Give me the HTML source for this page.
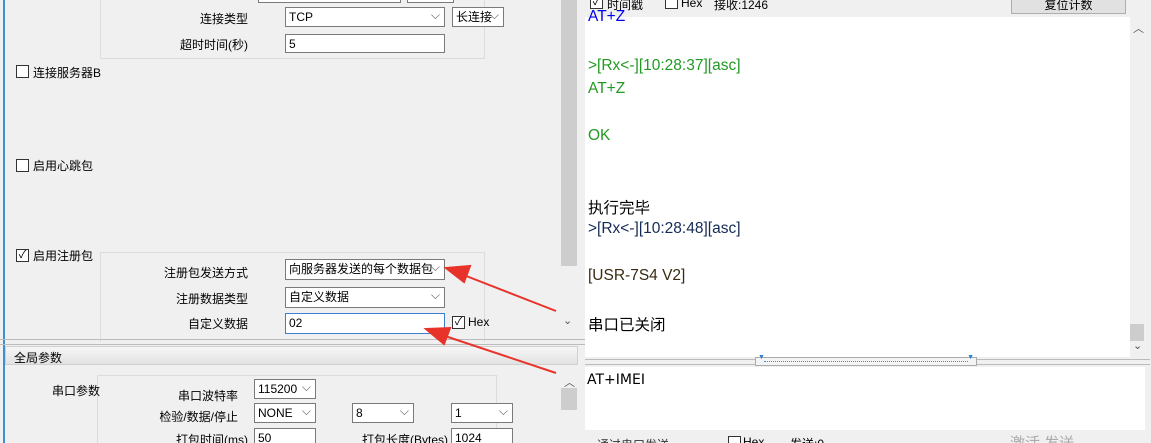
<!DOCTYPE html>
<html style="width:1151px;height:443px;overflow:hidden"><head><meta charset="utf-8"><style>
*{margin:0;padding:0;box-sizing:border-box}
body{width:1151px;height:443px;overflow:hidden;background:#f0f0f0;position:relative;font-family:"Liberation Sans","Noto Sans CJK SC",sans-serif;font-size:12px;color:#000}
.a{position:absolute;white-space:nowrap}
.box{position:absolute;background:#fff;border:1px solid #7a7a7a;font-size:12px;padding:2px 3px;line-height:14px;overflow:hidden}
.sel::after{content:"⌵";position:absolute;right:4px;top:0;color:#555;font-size:12px}
.grp{position:absolute;border:1px solid #dcdcdc}
.cb{position:absolute;width:13px;height:13px;border:1px solid #333;background:#fff;font-size:11px;line-height:11px;text-align:center}
.lbl{position:absolute;text-align:right;white-space:nowrap}
.r{position:absolute;left:588px;font-size:15.5px;white-space:nowrap}
</style></head><body>
<div class="a" style="left:3px;top:0;width:2px;height:443px;background:#3d8fd8"></div>
<div class="grp" style="left:100px;top:-5px;width:385px;height:64px"></div>
<div class="box" style="left:258px;top:-5px;width:143px;height:8px"></div>
<div class="box" style="left:407px;top:-5px;width:47px;height:8px"></div>
<div class="lbl" style="left:180px;width:68px;top:10px">连接类型</div>
<div class="box sel" style="left:285px;top:7px;width:160px;height:20px">TCP</div>
<div class="box sel" style="left:452px;top:7px;width:52px;height:20px">长连接</div>
<div class="lbl" style="left:180px;width:68px;top:36px">超时时间(秒)</div>
<div class="box" style="left:285px;top:34px;width:160px;height:19px">5</div>
<div class="cb" style="left:16px;top:65px"></div><div class="a" style="left:33px;top:64px">连接服务器B</div>
<div class="cb" style="left:16px;top:159px"></div><div class="a" style="left:33px;top:157px">启用心跳包</div>
<div class="cb" style="left:16px;top:249px">✓</div><div class="a" style="left:33px;top:247px">启用注册包</div>
<div class="grp" style="left:100px;top:252px;width:385px;height:90px;border-bottom:none"></div>
<div class="lbl" style="left:150px;width:98px;top:264px">注册包发送方式</div>
<div class="box sel" style="left:285px;top:259px;width:160px;height:21px">向服务器发送的每个数据包</div>
<div class="lbl" style="left:150px;width:98px;top:290px">注册数据类型</div>
<div class="box sel" style="left:285px;top:287px;width:160px;height:21px">自定义数据</div>
<div class="lbl" style="left:150px;width:98px;top:315px">自定义数据</div>
<div class="box" style="left:285px;top:313px;width:160px;height:21px;border-color:#3c7fd0">02</div>
<div class="cb" style="left:452px;top:316px">✓</div><div class="a" style="left:468px;top:315px">Hex</div>
<div class="a" style="left:560px;top:0;width:18px;height:345px;background:#f0f0f0"></div>
<div class="a" style="left:561px;top:0;width:16px;height:266px;background:#cdcdcd"></div>
<div class="a" style="left:563px;top:314px;font-size:11px;color:#555">⌄</div>
<div class="a" style="left:0;top:339px;width:585px;height:6px;border-top:1px solid #bbb;border-bottom:1px solid #bbb"></div>
<div class="a" style="left:5px;top:346px;width:573px;height:19px;background:linear-gradient(#f6f6f6,#e2e2e2);border:1px solid #d0d0d0;padding:2px 8px">全局参数</div>
<div class="a" style="left:560px;top:366px;width:18px;height:77px;background:#f0f0f0"></div>
<div class="a" style="left:564px;top:374px;font-size:11px;color:#555">︿</div>
<div class="a" style="left:561px;top:388px;width:16px;height:22px;background:#cdcdcd"></div>
<div class="grp" style="left:97px;top:375px;width:400px;height:70px"></div>
<div class="lbl" style="left:40px;width:60px;top:382px">串口参数</div>
<div class="lbl" style="left:150px;width:88px;top:387px">串口波特率</div>
<div class="box sel" style="left:254px;top:379px;width:62px;height:20px">115200</div>
<div class="lbl" style="left:130px;width:108px;top:408px">检验/数据/停止</div>
<div class="box sel" style="left:254px;top:403px;width:62px;height:20px">NONE</div>
<div class="box sel" style="left:352px;top:403px;width:62px;height:20px">8</div>
<div class="box sel" style="left:451px;top:403px;width:62px;height:20px">1</div>
<div class="lbl" style="left:130px;width:118px;top:431px">打包时间(ms)</div>
<div class="box" style="left:254px;top:428px;width:62px;height:20px">50</div>
<div class="lbl" style="left:330px;width:118px;top:431px">打包长度(Bytes)</div>
<div class="box" style="left:451px;top:428px;width:62px;height:20px">1024</div>
<div class="cb" style="left:590px;top:-4px">✓</div><div class="a" style="left:607px;top:-4px">时间戳</div>
<div class="cb" style="left:665px;top:-4px"></div><div class="a" style="left:681px;top:-4px">Hex</div>
<div class="a" style="left:714px;top:-4px">接收:1246</div>
<div class="a" style="left:1011px;top:-4px;width:115px;height:18px;border:1px solid #adadad;background:#e1e1e1;text-align:center;line-height:16px">复位计数</div>
<div class="a" style="left:585px;top:17px;width:545px;height:340px;background:#fff"></div>
<div class="a" style="left:1130px;top:17px;width:15px;height:340px;background:#f0f0f0"></div>
<div class="a" style="left:1133px;top:20px;font-size:11px;color:#555">︿</div>
<div class="a" style="left:1130px;top:324px;width:14px;height:17px;background:#cdcdcd"></div>
<div class="a" style="left:1133px;top:339px;font-size:11px;color:#555">⌄</div>
<div class="r" style="top:8px;color:#0000ee">AT+Z</div>
<div class="r" style="top:57px;color:#229922">&gt;[Rx&lt;-][10:28:37][asc]</div>
<div class="r" style="top:80px;color:#229922">AT+Z</div>
<div class="r" style="top:127px;color:#229922">OK</div>
<div class="r" style="top:196px">执行完毕</div>
<div class="r" style="top:220px;color:#142a55">&gt;[Rx&lt;-][10:28:48][asc]</div>
<div class="r" style="top:267px;color:#3a2a10">[USR-7S4 V2]</div>
<div class="r" style="top:313px">串口已关闭</div>
<div class="a" style="left:585px;top:359px;width:565px;height:6px;border-top:1px solid #bbb;border-bottom:1px solid #bbb"></div>
<div class="a" style="left:755px;top:357px;width:222px;height:9px;border:1px solid #aaa;background:#f4f4f4"><div style="position:absolute;left:8px;right:8px;top:3px;border-top:1px dotted #3a8ee6"></div><span style="position:absolute;left:2px;top:-4px;font-size:7px;color:#2a7fd6">▼</span><span style="position:absolute;right:2px;top:-4px;font-size:7px;color:#2a7fd6">▼</span></div>
<div class="a" style="left:585px;top:367px;width:560px;height:63px;background:#fff"></div>
<div class="a" style="left:587px;top:372px;font-family:'DejaVu Sans',sans-serif;font-size:14px">AT+IMEI</div>
<div class="a" style="left:597px;top:436px;color:#333">通过串口发送</div>
<div class="cb" style="left:728px;top:436px"></div><div class="a" style="left:743px;top:435px">Hex</div>
<div class="a" style="left:790px;top:435px">发送:0</div>
<div class="a" style="left:1010px;top:432px;color:#aaa;font-size:15px">激活 发送</div>
<svg class="a" style="left:0;top:0" width="1151" height="443">
<g stroke="#e8332b" stroke-width="2" fill="#e8332b">
<line x1="556" y1="311" x2="456" y2="272"/>
<polygon points="446,268 470,266 464,282"/>
<line x1="556" y1="373" x2="436" y2="333"/>
<polygon points="426,329 450,328 444,344"/>
</g></svg>
</body></html>
